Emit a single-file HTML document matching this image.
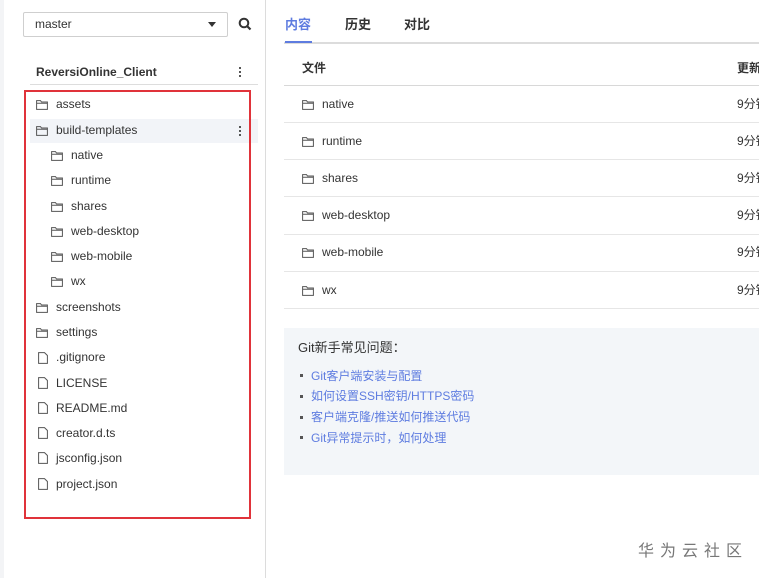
<!DOCTYPE html>
<html><head><meta charset="utf-8"><style>
*{margin:0;padding:0;box-sizing:border-box}
body{width:759px;height:578px;overflow:hidden;background:#fff;font-family:"Liberation Sans","Noto Sans CJK SC",sans-serif;font-size:12px;color:#333;position:relative}
.abs{position:absolute}
.fi{position:absolute;width:12px;height:10px}
.t{position:absolute;font-size:12px;color:#333;line-height:14px;white-space:nowrap}
.row{position:absolute;left:284px;right:0;height:1px;background:#e6e6e6}
</style></head><body>
<div class="abs" style="left:0;top:0;width:4px;height:578px;background:#f3f4f6"></div>
<div class="abs" style="left:265px;top:0;width:1px;height:578px;background:#dcdcdc"></div>
<div class="abs" style="left:23px;top:12px;width:205px;height:25px;border:1px solid #cfcfcf;border-radius:2px"></div>
<div class="t" style="left:35px;top:17px">master</div>
<div class="abs" style="left:208px;top:22px;width:0;height:0;border-left:4px solid transparent;border-right:4px solid transparent;border-top:5px solid #333"></div>
<svg class="abs" style="left:238px;top:17px" width="14" height="14" viewBox="0 0 14 14"><circle cx="6" cy="6" r="4.3" fill="none" stroke="#333" stroke-width="2"/><line x1="9" y1="9" x2="12.5" y2="12.5" stroke="#333" stroke-width="2.2"/></svg>
<div class="t" style="left:36px;top:65px;font-weight:bold">ReversiOnline_Client</div>
<div class="abs" style="left:239px;top:67px;width:2px;height:2px;background:#555;box-shadow:0 4px #555,0 8px #555"></div>
<div class="abs" style="left:30px;top:84px;width:228px;height:1px;background:#ddd"></div>
<div class="abs" style="left:30px;top:119px;width:228px;height:24px;background:#f2f4f8"></div>
<div class="abs" style="left:239px;top:126px;width:2px;height:2px;background:#555;box-shadow:0 4px #555,0 8px #555"></div>
<div class="abs" style="left:24px;top:90px;width:227px;height:429px;border:2px solid #e0333a"></div>
<svg width="0" height="0" style="position:absolute"><defs>
<symbol id="fd" viewBox="0 0 12 10"><path d="M0.6 0.6H4.5L5.5 2H11.4V9.4H0.6Z M0.6 3.2H11.4" fill="none" stroke="#555" stroke-width="1"/></symbol>
<symbol id="fl" viewBox="0 0 10 12"><path d="M0.6 0.6H6.5L9.4 3.5V11.4H0.6Z" fill="none" stroke="#555" stroke-width="1"/></symbol>
</defs></svg>
<svg class="fi" style="left:36px;top:100px"><use href="#fd"/></svg><div class="t" style="left:56px;top:97px">assets</div>
<svg class="fi" style="left:36px;top:126px"><use href="#fd"/></svg><div class="t" style="left:56px;top:123px">build-templates</div>
<svg class="fi" style="left:51px;top:151px"><use href="#fd"/></svg><div class="t" style="left:71px;top:148px">native</div>
<svg class="fi" style="left:51px;top:176px"><use href="#fd"/></svg><div class="t" style="left:71px;top:173px">runtime</div>
<svg class="fi" style="left:51px;top:202px"><use href="#fd"/></svg><div class="t" style="left:71px;top:199px">shares</div>
<svg class="fi" style="left:51px;top:227px"><use href="#fd"/></svg><div class="t" style="left:71px;top:224px">web-desktop</div>
<svg class="fi" style="left:51px;top:252px"><use href="#fd"/></svg><div class="t" style="left:71px;top:249px">web-mobile</div>
<svg class="fi" style="left:51px;top:277px"><use href="#fd"/></svg><div class="t" style="left:71px;top:274px">wx</div>
<svg class="fi" style="left:36px;top:303px"><use href="#fd"/></svg><div class="t" style="left:56px;top:300px">screenshots</div>
<svg class="fi" style="left:36px;top:328px"><use href="#fd"/></svg><div class="t" style="left:56px;top:325px">settings</div>
<svg class="fi" style="left:37px;top:352px;height:12px"><use href="#fl"/></svg><div class="t" style="left:56px;top:350px">.gitignore</div>
<svg class="fi" style="left:37px;top:377px;height:12px"><use href="#fl"/></svg><div class="t" style="left:56px;top:376px">LICENSE</div>
<svg class="fi" style="left:37px;top:402px;height:12px"><use href="#fl"/></svg><div class="t" style="left:56px;top:401px">README.md</div>
<svg class="fi" style="left:37px;top:427px;height:12px"><use href="#fl"/></svg><div class="t" style="left:56px;top:426px">creator.d.ts</div>
<svg class="fi" style="left:37px;top:452px;height:12px"><use href="#fl"/></svg><div class="t" style="left:56px;top:451px">jsconfig.json</div>
<svg class="fi" style="left:37px;top:478px;height:12px"><use href="#fl"/></svg><div class="t" style="left:56px;top:477px">project.json</div>
<div class="t" style="left:285px;top:18px;font-size:13px;color:#5e7ce0;font-weight:bold">内容</div>
<div class="t" style="left:345px;top:18px;font-size:13px;font-weight:bold">历史</div>
<div class="t" style="left:404px;top:18px;font-size:13px;font-weight:bold">对比</div>
<div class="abs" style="left:284px;top:42px;right:0;height:2px;background:#dcdcdc"></div>
<div class="abs" style="left:285px;top:41px;width:27px;height:2px;background:#5e7ce0"></div>
<div class="t" style="left:302px;top:61px;font-weight:bold">文件</div>
<div class="t" style="left:737px;top:61px;font-weight:bold">更新</div>
<div class="row" style="top:85px;background:#d8d8d8"></div>
<div class="row" style="top:122px"></div><div class="row" style="top:159px"></div><div class="row" style="top:196px"></div><div class="row" style="top:234px"></div><div class="row" style="top:271px"></div><div class="row" style="top:308px"></div>
<svg class="fi" style="left:302px;top:100px"><use href="#fd"/></svg><div class="t" style="left:322px;top:97px">native</div><div class="t" style="left:737px;top:97px">9分钟</div>
<svg class="fi" style="left:302px;top:137px"><use href="#fd"/></svg><div class="t" style="left:322px;top:134px">runtime</div><div class="t" style="left:737px;top:134px">9分钟</div>
<svg class="fi" style="left:302px;top:174px"><use href="#fd"/></svg><div class="t" style="left:322px;top:171px">shares</div><div class="t" style="left:737px;top:171px">9分钟</div>
<svg class="fi" style="left:302px;top:211px"><use href="#fd"/></svg><div class="t" style="left:322px;top:208px">web-desktop</div><div class="t" style="left:737px;top:208px">9分钟</div>
<svg class="fi" style="left:302px;top:248px"><use href="#fd"/></svg><div class="t" style="left:322px;top:245px">web-mobile</div><div class="t" style="left:737px;top:245px">9分钟</div>
<svg class="fi" style="left:302px;top:286px"><use href="#fd"/></svg><div class="t" style="left:322px;top:283px">wx</div><div class="t" style="left:737px;top:283px">9分钟</div>
<div class="abs" style="left:284px;top:328px;right:0;height:147px;background:#f3f6f9"></div>
<div class="t" style="left:298px;top:341px;font-size:13px">Git新手常见问题：</div>
<div class="abs" style="left:300px;top:374px;width:3px;height:3px;background:#555;box-shadow:0 21px #555,0 42px #555,0 62px #555"></div>
<div class="t" style="left:311px;top:369px;color:#5e7ce0">Git客户端安装与配置</div>
<div class="t" style="left:311px;top:389px;color:#5e7ce0">如何设置SSH密钥/HTTPS密码</div>
<div class="t" style="left:311px;top:410px;color:#5e7ce0">客户端克隆/推送如何推送代码</div>
<div class="t" style="left:311px;top:431px;color:#5e7ce0">Git异常提示时，如何处理</div>
<div class="t" style="left:638px;top:543px;font-size:16px;color:#777;letter-spacing:6px;line-height:18px">华为云社区</div>
</body></html>
